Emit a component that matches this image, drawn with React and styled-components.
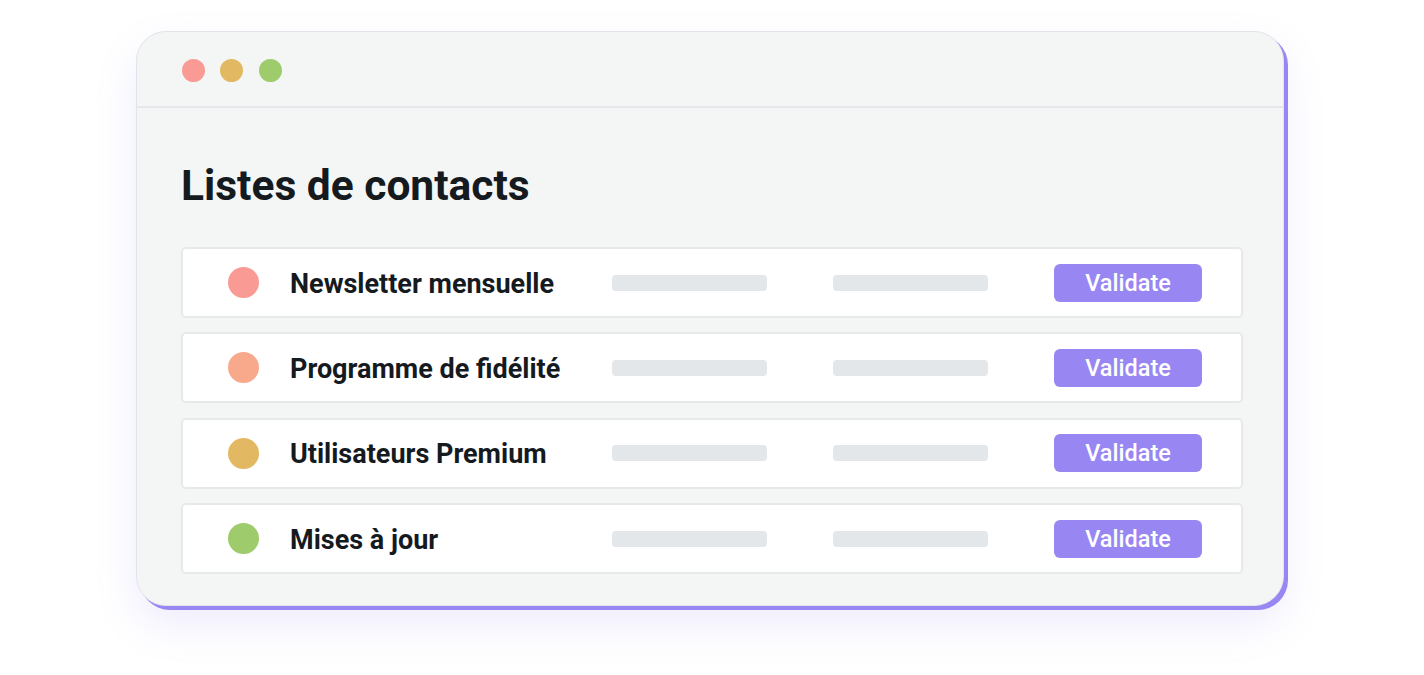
import styled, { createGlobalStyle } from "styled-components";

const GlobalStyle = createGlobalStyle`
  html, body {
    margin: 0;
    padding: 0;
    background: #ffffff;
  }
  body {
    font-family: Roboto, "Liberation Sans", Arial, sans-serif;
  }
`;

const Page = styled.div`
  width: 1424px;
  height: 675px;
  padding: 31px 0 0 136px;
  box-sizing: border-box;
`;

const Window = styled.div`
  width: 1148px;
  height: 575px;
  box-sizing: border-box;
  background: #f4f6f5;
  border: 1px solid #e2e4ea;
  border-radius: 30px;
  box-shadow: 4px 4px 0 #9887f2, 0 18px 40px rgba(152, 135, 242, 0.16);
  display: flex;
  flex-direction: column;
  overflow: hidden;
`;

const TitleBar = styled.div`
  height: 76px;
  flex-shrink: 0;
  box-sizing: border-box;
  border-bottom: 2px solid #e5e7ea;
  display: flex;
  align-items: center;
  gap: 15.5px;
  padding: 2px 0 0 44.5px;
`;

const WinDot = styled.span`
  width: 23px;
  height: 23px;
  border-radius: 50%;
  background: ${(p) => p.color};
`;

const Content = styled.div`
  padding: 54px 40px 0 44px;
`;

const Title = styled.h1`
  margin: 0 0 37px;
  font-size: 42.5px;
  line-height: 48px;
  font-weight: 700;
  color: #151a1f;
`;

const List = styled.div`
  display: flex;
  flex-direction: column;
  gap: 14.4px;
`;

const Row = styled.div`
  height: 71px;
  flex-shrink: 0;
  box-sizing: border-box;
  background: #ffffff;
  border: 2px solid #e6e8ea;
  border-radius: 5px;
  display: flex;
  align-items: center;
  padding: 0 39px 0 44.5px;
`;

const Bullet = styled.span`
  width: 31px;
  height: 31px;
  border-radius: 50%;
  background: ${(p) => p.color};
  flex-shrink: 0;
  margin-right: 31.5px;
`;

const Name = styled.div`
  width: 322px;
  flex-shrink: 0;
  font-size: 27px;
  font-weight: 700;
  color: #151a1f;
  white-space: nowrap;
  padding-top: 2px;
`;

const Bar = styled.span`
  width: 155px;
  height: 16px;
  border-radius: 4px;
  background: #e4e7ea;
  flex-shrink: 0;
  margin-right: 66px;
`;

const Button = styled.button`
  width: 148px;
  height: 38px;
  border: none;
  border-radius: 6px;
  background: #9887f2;
  color: #ffffff;
  font-family: Roboto, "Liberation Sans", Arial, sans-serif;
  font-size: 23.5px;
  font-weight: 500;
  padding: 0;
  cursor: pointer;
`;

const lists = [
  { name: "Newsletter mensuelle", color: "#f99b94" },
  { name: "Programme de fidélité", color: "#f8a98b" },
  { name: "Utilisateurs Premium", color: "#e3b862" },
  { name: "Mises à jour", color: "#9ecb6b" },
];

export default function App() {
  return (
    <>
      <GlobalStyle />
      <Page>
        <Window>
          <TitleBar>
            <WinDot color="#f99a94" />
            <WinDot color="#e3b862" />
            <WinDot color="#9ecb6b" />
          </TitleBar>
          <Content>
            <Title>Listes de contacts</Title>
            <List>
              {lists.map((l) => (
                <Row key={l.name}>
                  <Bullet color={l.color} />
                  <Name>{l.name}</Name>
                  <Bar />
                  <Bar />
                  <Button>Validate</Button>
                </Row>
              ))}
            </List>
          </Content>
        </Window>
      </Page>
    </>
  );
}
